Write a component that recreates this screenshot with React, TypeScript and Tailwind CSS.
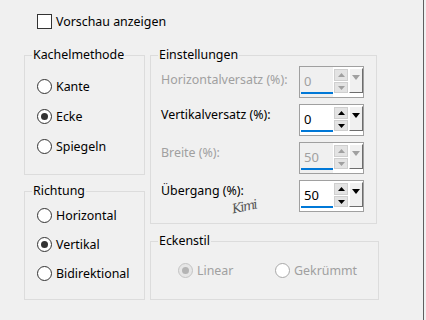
import type { ReactNode } from 'react';

function Group({ title, className, children }: { title: string; className: string; children?: ReactNode }) {
  return (
    <div className={`relative border border-[#dcdcdc] ${className}`}>
      <span className="absolute -top-[10px] left-[7px] px-[1px] bg-[#f0f0f0] leading-[18px] text-black">{title}</span>
      {children}
    </div>
  );
}

function Radio({ label, checked, disabled, className = '' }: { label: string; checked?: boolean; disabled?: boolean; className?: string }) {
  const ring = disabled
    ? checked
      ? 'border-[#c4c4c4] bg-[#e6e6e6]'
      : 'border-[#a8a8a8] bg-white'
    : 'border-[#333333] bg-white';
  return (
    <div className={`flex items-center h-[15px] ${className}`}>
      <span className={`w-[15px] h-[15px] rounded-full border flex items-center justify-center shrink-0 ${ring}`}>
        {checked && <span className={`w-[7px] h-[7px] rounded-full ${disabled ? 'bg-[#b4b4b4]' : 'bg-[#333333]'}`} />}
      </span>
      <span className={`ml-[4px] leading-[18px] whitespace-nowrap ${disabled ? 'text-[#a0a0a0]' : 'text-black'}`}>{label}</span>
    </div>
  );
}

function Tri({ up, color, w = 7, h = 4 }: { up?: boolean; color: string; w?: number; h?: number }) {
  return (
    <svg width={w} height={h} viewBox={`0 0 ${w} ${h}`}>
      <polygon points={up ? `0,${h} ${w / 2},0 ${w},${h}` : `0,0 ${w},0 ${w / 2},${h}`} fill={color} />
    </svg>
  );
}

function Spin({ value, disabled }: { value: string; disabled?: boolean }) {
  const arrow = disabled ? '#a0a0a0' : '#000000';
  return (
    <div className="w-[65px] h-[32px] border border-[#a0a0a0] bg-white flex">
      <div className={`w-[33px] flex flex-col ${disabled ? 'bg-[#f0f0f0]' : 'bg-white'}`}>
        <span className={`flex-1 pl-[4px] pt-[6px] leading-[16px] text-[13px] ${disabled ? 'text-[#a0a0a0]' : 'text-black'}`}>{value}</span>
        <div className="h-[2px] bg-[#0078d7] ml-[1px] mr-0 mb-[3px]" />
      </div>
      <div className="flex flex-col pt-[2px] ml-[1px] gap-[1px]">
        <div className="w-[14px] h-[12px] border border-[#cfcfcf] bg-[#e3e3e3] flex items-center justify-center">
          <Tri up color={arrow} />
        </div>
        <div className="w-[14px] h-[11px] border border-[#cfcfcf] bg-[#e3e3e3] flex items-center justify-center">
          <Tri color={arrow} />
        </div>
      </div>
      <div className="mt-[1px] ml-[1px] w-[14px] h-[25px] border-l border-t border-white border-r border-b border-r-[#6d6d6d] border-b-[#6d6d6d] bg-[#f0f0f0] flex justify-center pt-[6px]">
        <Tri color={arrow} w={8} h={5} />
      </div>
    </div>
  );
}

function SpinRow({ label, value, disabled, labelTop }: { label: string; value: string; disabled?: boolean; labelTop: string }) {
  return (
    <div className="flex items-start">
      <span className={`flex-1 leading-[18px] ${labelTop} ${disabled ? 'text-[#a0a0a0]' : 'text-black'}`}>{label}</span>
      <Spin value={value} disabled={disabled} />
    </div>
  );
}

export default function App() {
  return (
    <div className="w-[426px] h-[320px] bg-[#f0f0f0] flex overflow-hidden font-['Noto_Sans',sans-serif] text-[12.4px] text-black">
      <div className="w-[423px]">
        <div className="pt-[14px] pl-[37px] flex items-center">
          <span className="w-[15px] h-[15px] border border-[#333333] bg-white shrink-0" />
          <span className="ml-[4px] leading-[15px]">Vorschau anzeigen</span>
        </div>

        <div className="mt-[26px] pl-[24px] flex gap-[5px]">
          <div className="flex flex-col gap-[16px]">
            <Group title="Kachelmethode" className="w-[121px] h-[120px] pt-[23px] pl-[12px] flex flex-col gap-[15px]">
              <Radio label="Kante" />
              <Radio label="Ecke" checked />
              <Radio label="Spiegeln" />
            </Group>
            <Group title="Richtung" className="w-[121px] h-[109px] pt-[16px] pl-[12px] flex flex-col gap-[14px]">
              <Radio label="Horizontal" />
              <Radio label="Vertikal" checked />
              <Radio label="Bidirektional" />
            </Group>
          </div>

          <div className="flex flex-col gap-[17px]">
            <Group title="Einstellungen" className="w-[227px] h-[169px] pt-[10px] pl-[10px] pr-[12px] flex flex-col gap-[6px]">
              <SpinRow label="Horizontalversatz (%):" value="0" disabled labelTop="mt-[5px]" />
              <SpinRow label="Vertikalversatz (%):" value="0" labelTop="mt-[2px]" />
              <SpinRow label="Breite (%):" value="50" disabled labelTop="mt-[2px]" />
              <SpinRow label="Übergang (%):" value="50" labelTop="mt-[2px]" />
              <span className="absolute left-[81px] top-[144px] font-['DejaVu_Serif',serif] italic text-[13px] leading-[14px] tracking-[-1.5px] text-[#555555] -rotate-12">Kimi</span>
            </Group>
            <Group title="Eckenstil" className="w-[229px] h-[59px] pt-[21px] pl-[27px] flex">
              <Radio label="Linear" checked disabled className="w-[97px]" />
              <Radio label="Gekrümmt" disabled />
            </Group>
          </div>
        </div>
      </div>
      <div className="w-px bg-[#5f5f5f]" />
    </div>
  );
}
